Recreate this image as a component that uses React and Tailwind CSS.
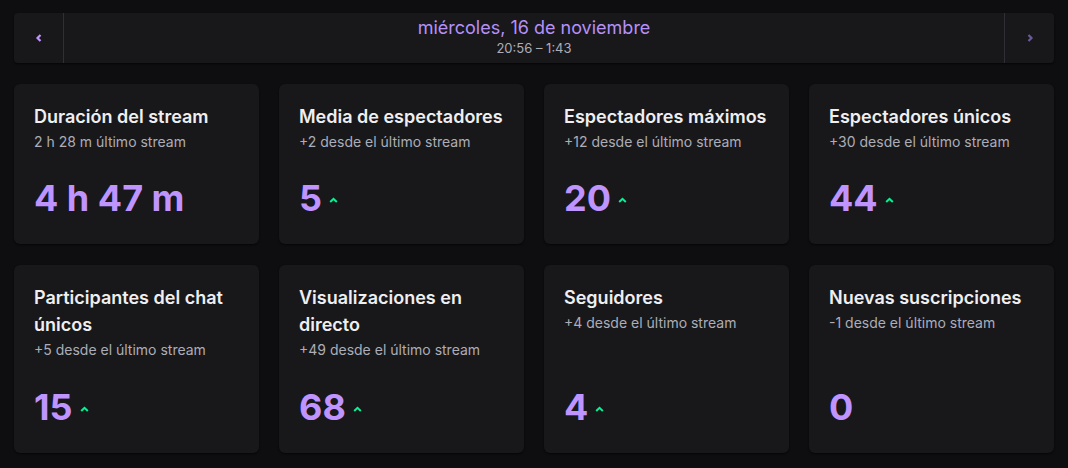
import React from 'react';

const stats = [
  { title: 'Duración del stream', sub: '2 h 28 m último stream', value: '4 h 47 m', up: false },
  { title: 'Media de espectadores', sub: '+2 desde el último stream', value: '5', up: true },
  { title: 'Espectadores máximos', sub: '+12 desde el último stream', value: '20', up: true },
  { title: 'Espectadores únicos', sub: '+30 desde el último stream', value: '44', up: true },
  { title: 'Participantes del chat únicos', sub: '+5 desde el último stream', value: '15', up: true },
  { title: 'Visualizaciones en directo', sub: '+49 desde el último stream', value: '68', up: true },
  { title: 'Seguidores', sub: '+4 desde el último stream', value: '4', up: true },
  { title: 'Nuevas suscripciones', sub: '-1 desde el último stream', value: '0', up: false },
];

function Caret() {
  return (
    <svg width="9" height="6" viewBox="0 0 9 6" className="ml-[7px] mt-[3px]">
      <path d="M1.2 5L4.5 1.8L7.8 5" fill="none" stroke="#00f593" strokeWidth="2" />
    </svg>
  );
}

function StatCard({ title, sub, value, up }) {
  return (
    <div className="flex flex-col rounded-md bg-[#18181b] px-5 pt-[19px] pb-[26px] shadow-[0_1px_2px_rgba(0,0,0,0.6)]">
      <div className="text-[18px] font-semibold leading-[27px] text-[#efeff1]">{title}</div>
      <div className="mt-[2px] text-[14px] leading-[20px] text-[#adadb8]">{sub}</div>
      <div className="mt-auto flex items-center pt-6">
        <span className="text-[36px] font-bold leading-[40px] text-[#bf94ff]">{value}</span>
        {up && <Caret />}
      </div>
    </div>
  );
}

export default function App() {
  return (
    <div className="min-h-[468px] w-[1068px] bg-[#0e0e10] px-[14px] pt-[13px] pb-[15px] font-['Inter',sans-serif]">
      {/* Date navigator */}
      <div className="flex h-[50px] rounded-sm bg-[#18181b] shadow-[0_1px_2px_rgba(0,0,0,0.6)]">
        <button className="flex w-[50px] items-center justify-center border-r border-[#2f2f35]">
          <svg width="8" height="10" viewBox="0 0 8 10">
            <path d="M5.5 2L2.5 5L5.5 8" fill="none" stroke="#bf94ff" strokeWidth="2.2" />
          </svg>
        </button>
        <div className="flex flex-1 flex-col items-center justify-center pb-[3px]">
          <div className="text-[18px] leading-[22px] text-[#b690f8]">miércoles, 16 de noviembre</div>
          <div className="mt-[1px] text-[13px] leading-[17px] text-[#adadb8]">20:56 – 1:43</div>
        </div>
        <button className="flex w-[50px] items-center justify-center border-l border-[#2f2f35]">
          <svg width="8" height="10" viewBox="0 0 8 10">
            <path d="M2.5 2L5.5 5L2.5 8" fill="none" stroke="#6b5a9a" strokeWidth="2.2" />
          </svg>
        </button>
      </div>

      <div className="mt-[21px] grid grid-cols-4 gap-x-5 gap-y-[21px]">
        {stats.slice(0, 4).map((s) => (
          <div key={s.title} className="h-[160px] grid">
            <StatCard {...s} />
          </div>
        ))}
        {stats.slice(4).map((s) => (
          <div key={s.title} className="h-[188px] grid">
            <StatCard {...s} />
          </div>
        ))}
      </div>
    </div>
  );
}
